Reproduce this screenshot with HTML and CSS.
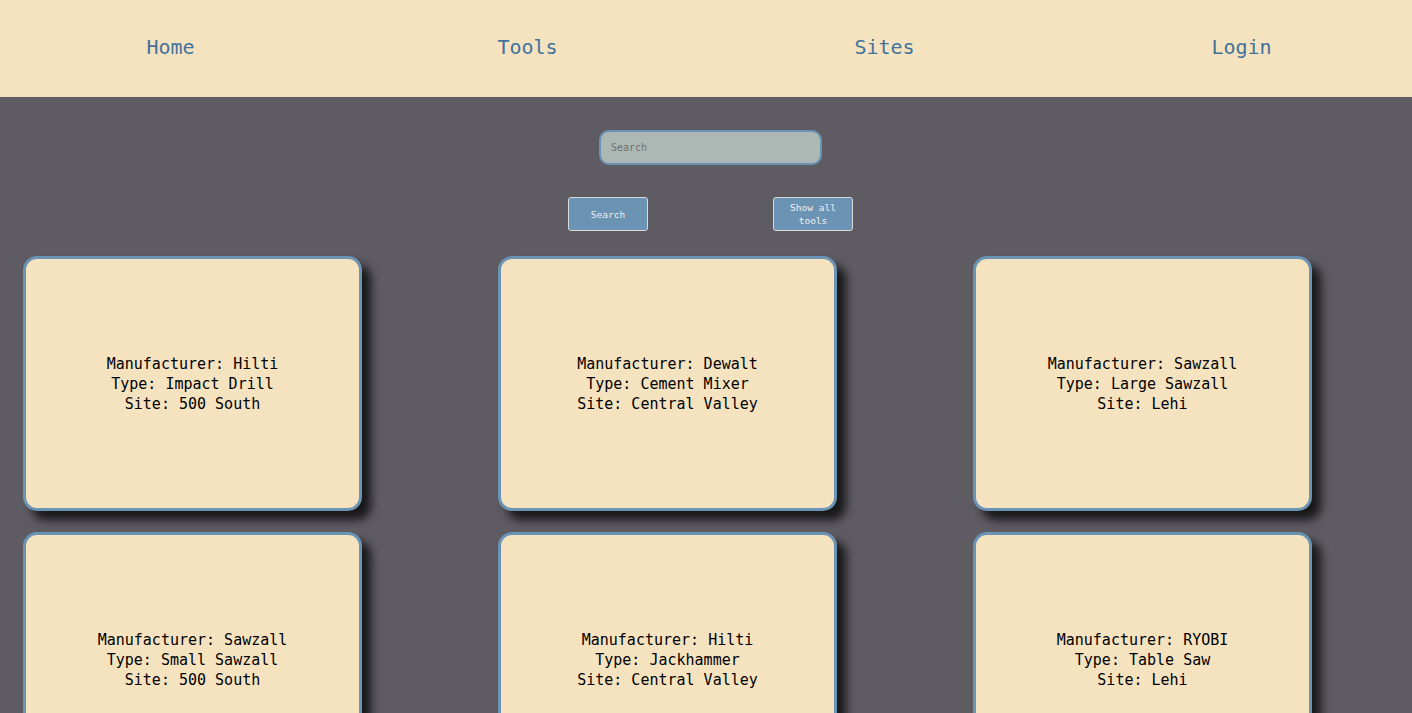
FILE: index.html
```html
<!DOCTYPE html>
<html lang="en">
<head>
    <meta charset="UTF-8">
    <meta name="viewport" content="width=device-width, initial-scale=1.0">
    <title>Tool Tracker</title>
    <link rel="stylesheet" href="styles.css">
</head>
<body>
    <header>
        <nav>
            <ul>
                <li><a href="#">Home</a></li>
                <li><a href="#">Tools</a></li>
                <li><a href="#">Sites</a></li>
                <li><a href="#">Login</a></li>
            </ul>
        </nav>
    </header>

    <!-- Search -->
    <section class="search">
        <input type="text" class="search-input" placeholder="Search">
        <div class="search-buttons">
            <button>Search</button>
            <button>Show all tools</button>
        </div>
    </section>

    <!-- Tool cards -->
    <section class="tool-list">
        <div class="tool-card">
            <p>Manufacturer: Hilti<br>Type: Impact Drill<br>Site: 500 South</p>
        </div>
        <div class="tool-card">
            <p>Manufacturer: Dewalt<br>Type: Cement Mixer<br>Site: Central Valley</p>
        </div>
        <div class="tool-card">
            <p>Manufacturer: Sawzall<br>Type: Large Sawzall<br>Site: Lehi</p>
        </div>
        <div class="tool-card">
            <p>Manufacturer: Sawzall<br>Type: Small Sawzall<br>Site: 500 South</p>
        </div>
        <div class="tool-card">
            <p>Manufacturer: Hilti<br>Type: Jackhammer<br>Site: Central Valley</p>
        </div>
        <div class="tool-card">
            <p>Manufacturer: RYOBI<br>Type: Table Saw<br>Site: Lehi</p>
        </div>
    </section>
</body>
</html>
```

FILE: styles.css
```css
body {
    font-family: "DejaVu Sans Mono", "Liberation Mono", monospace;
    background-color: #5e5b63;
    margin: 0;
    padding: 0;
    overflow: hidden;
}
header {
    background-color: #f5e3c0;
    height: 97px;
}
nav ul {
    list-style-type: none;
    margin: 0 -8px;
    padding: 0 0 4px 0;
    height: 97px;
    box-sizing: border-box;
    display: grid;
    grid-template-columns: repeat(4, 357px);
    align-items: center;
}
nav ul li {
    text-align: center;
}
nav ul li a {
    color: #41729c;
    text-decoration: none;
    font-size: 20px;
}
.search {
    display: flex;
    flex-direction: column;
    align-items: center;
    padding-top: 33px;
}
.search-input {
    width: 223px;
    height: 35px;
    box-sizing: border-box;
    margin-left: 9px;
    padding: 0 10px;
    border: 2px solid #6b93b3;
    border-radius: 10px;
    background-color: #adb7b3;
    font-family: inherit;
    font-size: 10px;
    color: #333;
    outline: none;
}
.search-input::placeholder {
    color: #6c7272;
}
.search-buttons {
    display: flex;
    gap: 125px;
    margin-top: 32px;
    margin-left: 9px;
}
.search-buttons button {
    width: 80px;
    height: 34px;
    background-color: #6b93b3;
    border: 1px solid #d9d9d9;
    border-radius: 3px;
    color: #f0f0f0;
    font-family: inherit;
    font-size: 9.5px;
    line-height: 13px;
    padding: 0 8px;
}
.tool-list {
    display: grid;
    grid-template-columns: repeat(3, 339px);
    column-gap: 136px;
    row-gap: 21px;
    padding: 25px 0 0 23px;
}
.tool-card {
    height: 255px;
    box-sizing: border-box;
    background-color: #f5e3c0;
    border: 3px solid #6b93b3;
    border-radius: 14px;
    box-shadow: 9px 9px 10px rgba(0, 0, 0, 0.75);
    display: flex;
    align-items: center;
    justify-content: center;
    text-align: center;
}
.tool-card p {
    margin: 0;
    font-size: 15px;
    line-height: 20px;
    color: #000;
}
```
